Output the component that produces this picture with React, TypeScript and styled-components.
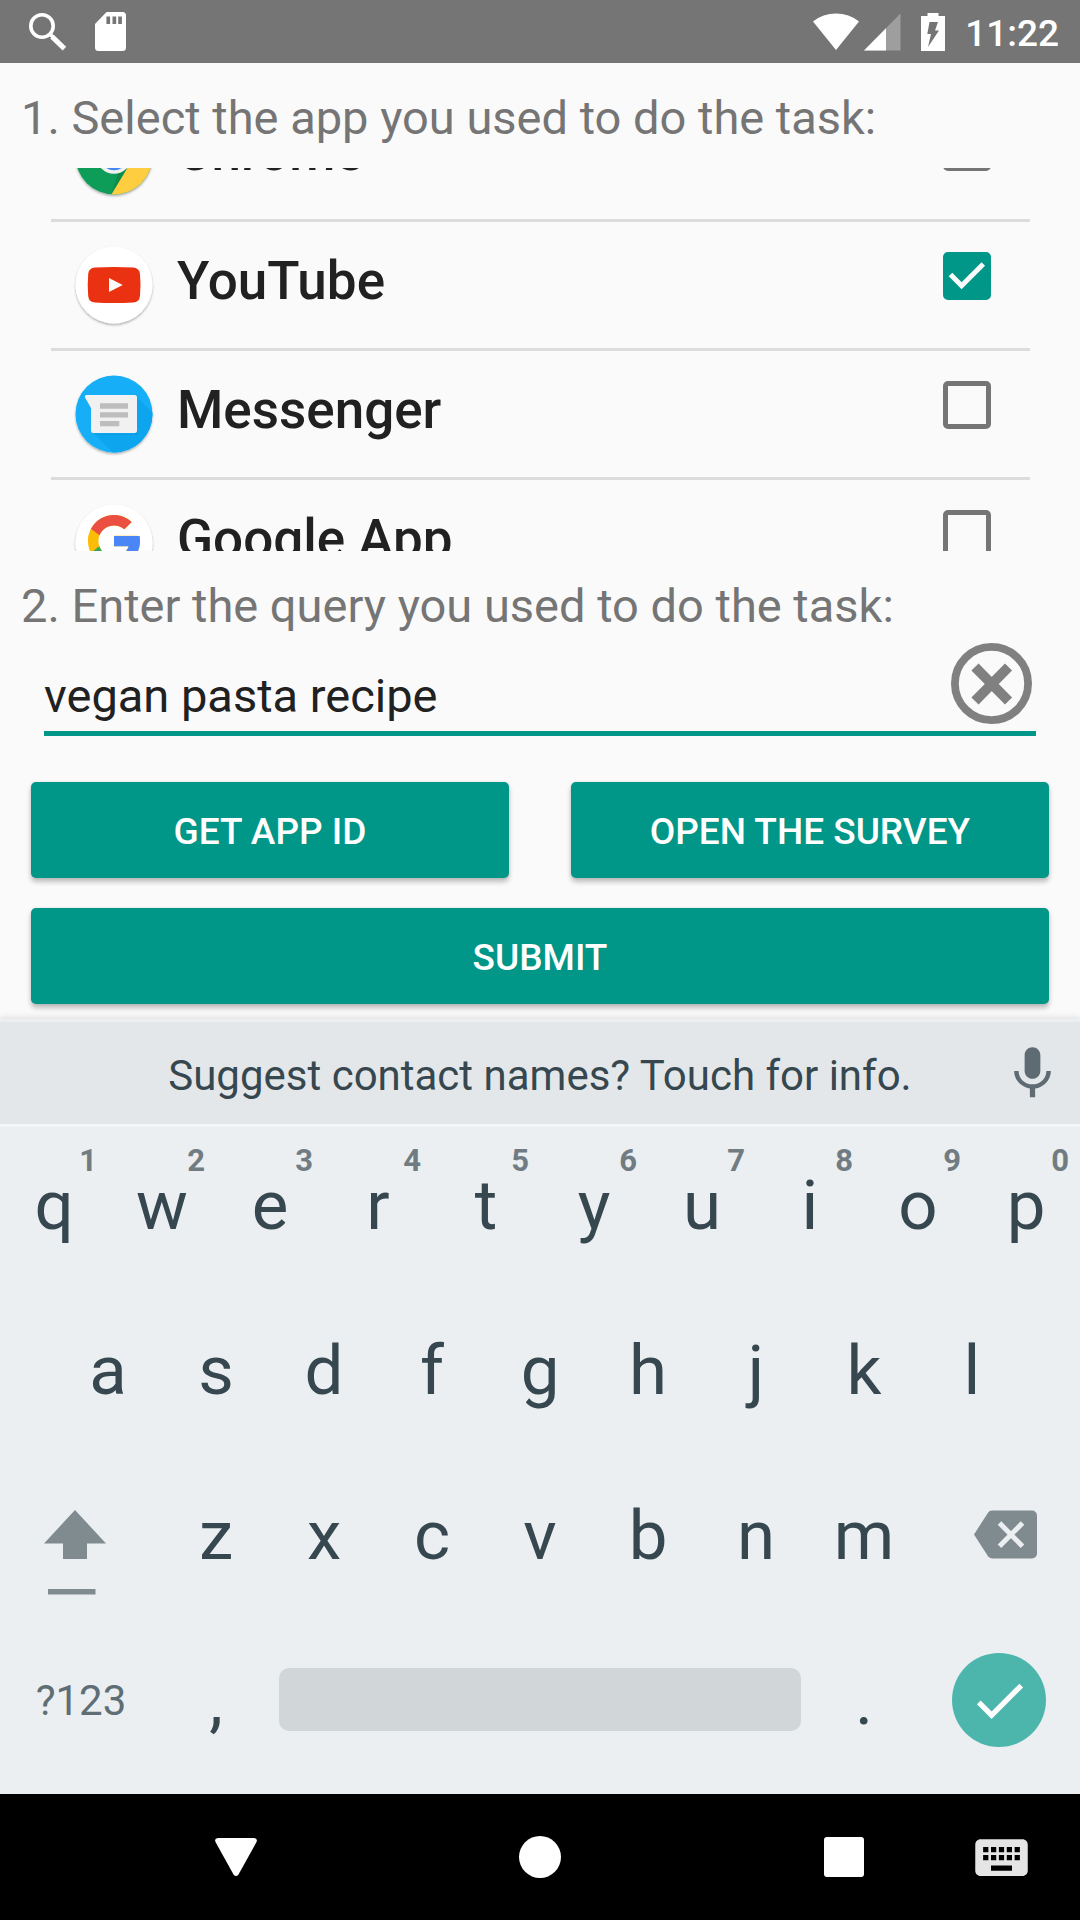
import React, { useLayoutEffect, useRef, useState } from "react";
import styled, { createGlobalStyle } from "styled-components";

const TEAL = "#009688";
const GREY = "#757575";
const INK = "#37474f";

const GlobalStyle = createGlobalStyle`
  *, *::before, *::after { box-sizing: border-box; }
  body { margin: 0; }
  body, button, input { font-family: Roboto, "Liberation Sans", sans-serif; }
  button { border: 0; padding: 0; background: none; color: inherit; cursor: pointer; }
  svg { display: block; flex: none; }
`;

const Screen = styled.div`
  display: flex;
  flex-direction: column;
  height: 100vh;
  overflow: hidden;
  background: #fafafa;
`;

/* ---------- status bar ---------- */

const StatusBar = styled.header`
  display: flex;
  align-items: center;
  justify-content: space-between;
  flex: none;
  height: 63px;
  padding: 0 21px 0 28px;
  background: ${GREY};
  color: #fff;
`;

const StatusGroup = styled.div<{ $gap: number }>`
  display: flex;
  align-items: center;
  gap: ${(p) => p.$gap}px;
`;

const Clock = styled.time`
  padding-top: 4px;
  font-size: 37px;
  line-height: 44px;
  font-weight: 500;
`;

/* ---------- form ---------- */

const Form = styled.form`
  display: flex;
  flex-direction: column;
  flex: 1;
  min-height: 0;
  padding-bottom: 15px;
`;

const Prompt = styled.h2`
  flex: none;
  margin: 0;
  padding: 27px 21px 0;
  font-size: 47px;
  line-height: 56px;
  font-weight: 400;
  color: ${GREY};
`;

const AppList = styled.ul`
  flex: 1;
  min-height: 0;
  margin: 22px 50px 0 51px;
  padding: 0;
  list-style: none;
  overflow-y: auto;
  scrollbar-width: none;
`;

const AppItem = styled.li`
  & + & { border-top: 3px solid #dcdcdc; }
`;

const AppRow = styled.label`
  display: flex;
  align-items: flex-start;
  height: 126px;
  padding: 24px 39px 0 24px;
`;

const AppName = styled.span`
  flex: 1;
  padding: 5px 0 0 24px;
  font-size: 53px;
  line-height: 60px;
  font-weight: 500;
  color: #212121;
`;

const Tick = styled.span`
  display: grid;
  margin-top: 6px;

  & > * { grid-area: 1 / 1; }
  & > svg { pointer-events: none; }
`;

const TickBox = styled.input`
  appearance: none;
  width: 48px;
  height: 48px;
  margin: 0;
  border: 5px solid ${GREY};
  border-radius: 5px;

  &:checked {
    border-color: ${TEAL};
    background: ${TEAL};
  }
`;

const Field = styled.div`
  display: flex;
  align-items: flex-end;
  flex: none;
  margin: 0 44px 46px;
  padding: 9px 4px 7px 0;
  border-bottom: 5px solid ${TEAL};
`;

const QueryInput = styled.input`
  flex: 1;
  min-width: 0;
  height: 56px;
  padding: 0;
  border: 0;
  outline: 0;
  background: none;
  font-size: 47px;
  line-height: 56px;
  color: #212121;
`;

const Actions = styled.div`
  display: grid;
  grid-template-columns: 1fr 1fr;
  gap: 30px 62px;
  flex: none;
  padding: 0 31px;
`;

const ActionButton = styled.button<{ $wide?: boolean }>`
  grid-column: ${(p) => (p.$wide ? "1 / -1" : "auto")};
  height: 96px;
  padding-top: 4px;
  border-radius: 5px;
  background: ${TEAL};
  box-shadow: 0 4px 5px rgba(0, 0, 0, 0.24), 0 0 3px rgba(0, 0, 0, 0.1);
  font-size: 37px;
  line-height: 44px;
  font-weight: 500;
  color: #fff;
`;

/* ---------- keyboard ---------- */

const Keyboard = styled.section`
  flex: none;
  padding-top: 3px;
  background: #ebeff2;
  box-shadow: 0 -2px 6px rgba(0, 0, 0, 0.1);
  color: ${INK};
`;

const SuggestionStrip = styled.div`
  display: grid;
  grid-template-columns: 80px 1fr 80px;
  align-items: center;
  height: 105px;
  border-bottom: 3px solid #f3f5f7;
  background: #e3e7ea;
`;

const Suggestion = styled.button`
  grid-column: 2;
  padding-top: 5px;
  font-size: 42px;
  line-height: 50px;
`;

const MicButton = styled.button`
  justify-self: center;
  padding-right: 16px;
  color: #5f6b72;
`;

const KeyRows = styled.div`
  padding-bottom: 7px;
`;

const KeyRow = styled.div<{ $columns: string; $inset?: boolean }>`
  display: grid;
  grid-template-columns: ${(p) => p.$columns};
  height: 165px;
  padding: 0 ${(p) => (p.$inset ? "5%" : "0")};
`;

const Key = styled.button`
  position: relative;
  display: flex;
  justify-content: center;
  align-items: flex-start;
  padding-top: 38px;
  font-size: 69px;
  line-height: 81px;
`;

const Hint = styled.span`
  position: absolute;
  top: 16px;
  right: 11px;
  font-size: 31px;
  line-height: 36px;
  font-weight: 700;
  color: #717c82;
`;

const IconKey = styled(Key)<{ $side: "left" | "right" }>`
  padding-top: 53px;
  padding-left: ${(p) => (p.$side === "right" ? 12 : 0)}px;
  padding-right: ${(p) => (p.$side === "left" ? 12 : 0)}px;
  color: #808b8f;
`;

const SymbolsKey = styled(Key)`
  font-size: 42px;
  color: #5f6e74;
`;

const SpaceKey = styled.button`
  height: 63px;
  margin: 46px 9px 0;
  border-radius: 10px;
  background: #d1d6d9;
`;

const DoneKey = styled.button`
  display: grid;
  place-items: center;
  justify-self: center;
  width: 94px;
  height: 94px;
  margin-top: 31px;
  border-radius: 50%;
  background: #4db6ac;
  color: #fff;
`;

/* ---------- navigation bar ---------- */

const NavBar = styled.nav`
  display: grid;
  grid-template-columns: 157px 158px 1fr 158px 157px;
  flex: none;
  height: 126px;
  background: #000;
  color: #fff;
`;

const NavButton = styled.button<{ $first?: boolean }>`
  grid-column: ${(p) => (p.$first ? 2 : "auto")};
  display: grid;
  place-items: center;
`;

/* ---------- drawings ---------- */

const SearchIcon = () => (
  <svg width="39" height="39" viewBox="0 0 39 39" fill="none" stroke="#fff">
    <circle cx="14" cy="14" r="11.2" strokeWidth="3.6" />
    <path d="M22.5 22.5L25 25" strokeWidth="3.6" />
    <path d="M24 24.6L36.4 36.6" strokeWidth="5" />
  </svg>
);

const SdCardIcon = () => (
  <svg width="31" height="39" viewBox="0 0 31 39">
    <path
      fill="#fff"
      fillRule="evenodd"
      d="M11.5 0H27.500a3.500 3.500 0 0 1 3.500 3.500V35.500a3.500 3.500 0 0 1-3.500 3.500H3.500A3.500 3.500 0 0 1 0 35.500V12zM11.400 4.500v7.500h3.700V4.500zM17.500 4.500v7.500h3.700V4.500zM23.200 4.500v7.500h3.700V4.500z"
    />
  </svg>
);

const SignalIcons = () => (
  <svg width="88" height="38" viewBox="0 0 88 38" fill="#fff">
    <path d="M0 8.500C6.500 3.200 14.500 0.500 23 0.500S39.500 3.200 46 8.500L23 37z" />
    <path d="M51 37.500L87.500 0.500V37.500z" opacity=".3" />
    <path d="M51 37.500L73 15.200V37.500z" />
  </svg>
);

const BatteryIcon = () => (
  <svg width="24" height="38" viewBox="0 0 24 38">
    <path fill="#fff" d="M6.500 0h11v3H24v35H0V3h6.500z" />
    <path fill={GREY} d="M8.500 9h8.500l-3 8.500h4L7 34l3-13H6.300z" />
  </svg>
);

const CheckIcon = ({ size }: { size: number }) => (
  <svg width={size} height={size} viewBox="0 0 24 24" fill="currentColor">
    <path d="M9 16.170L4.830 12l-1.420 1.410L9 19 21 7l-1.410-1.410z" />
  </svg>
);

const TickMark = () => (
  <svg width="48" height="48" viewBox="0 0 48 48" fill="none" stroke="#fafafa" strokeWidth="5">
    <path d="M7.500 22.500L18.600 33.700L40.300 12" />
  </svg>
);

const ClearIcon = () => (
  <svg width="81" height="81" viewBox="0 0 81 81" fill="none" stroke="#808080">
    <circle cx="40.500" cy="40.500" r="36.600" strokeWidth="7.800" />
    <path d="M24 24L57.500 58M57.500 24L24 58" strokeWidth="10" />
  </svg>
);

const MicIcon = () => (
  <svg width="63" height="63" viewBox="0 0 24 24" fill="currentColor">
    <path d="M12 14c1.660 0 2.990-1.340 2.990-3L15 5c0-1.660-1.340-3-3-3S9 3.340 9 5v6c0 1.660 1.340 3 3 3zm5.300-3c0 3-2.540 5.100-5.300 5.100S6.700 14 6.700 11H5c0 3.410 2.720 6.230 6 6.720V21h2v-3.280c3.280-.480 6-3.300 6-6.720h-1.700z" />
  </svg>
);

const ShiftIcon = () => (
  <svg width="62" height="85" viewBox="0 0 62 85" fill="currentColor">
    <path d="M31 0L62 33.500H43V49H19V33.500H0z" />
    <path d="M4 79h47.500v5.500H4z" />
  </svg>
);

const BackspaceIcon = () => (
  <svg width="63" height="49" viewBox="0 0 63 49">
    <path
      fill="currentColor"
      d="M18 0.500H58a5 5 0 0 1 5 5V43.500a5 5 0 0 1-5 5H18a5 5 0 0 1-4-2.200L0 24.500 14 2.700A5 5 0 0 1 18 0.500z"
    />
    <path d="M25.500 13L48.500 36.300M48.500 13L25.500 36.300" stroke="#ebeff2" strokeWidth="5" />
  </svg>
);

const NavKeyboardIcon = () => (
  <svg width="63" height="63" viewBox="0 0 24 24" fill="#e5e5e5">
    <path d="M20 5H4c-1.100 0-1.990.900-1.990 2L2 17c0 1.100.900 2 2 2h16c1.100 0 2-.900 2-2V7c0-1.100-.900-2-2-2zm-9 3h2v2h-2V8zm0 3h2v2h-2v-2zM8 8h2v2H8V8zm0 3h2v2H8v-2zm-1 2H5v-2h2v2zm0-3H5V8h2v2zm9 7H8v-2h8v2zm0-4h-2v-2h2v2zm0-3h-2V8h2v2zm3 3h-2v-2h2v2zm0-3h-2V8h2v2z" />
  </svg>
);

const Disc = ({ id, fill, children }: { id: string; fill: string; children: React.ReactNode }) => (
  <svg width="78" height="78" viewBox="0 0 78 78" overflow="visible">
    <defs>
      <clipPath id={id}>
        <circle cx="39" cy="39" r="38.500" />
      </clipPath>
      <filter id={`${id}-shadow`} x="-20%" y="-20%" width="140%" height="140%">
        <feDropShadow dx="0" dy="1.500" stdDeviation="1.200" floodOpacity=".32" />
      </filter>
    </defs>
    <circle cx="39" cy="39" r="38.500" fill={fill} filter={`url(#${id}-shadow)`} />
    <g clipPath={`url(#${id})`}>{children}</g>
  </svg>
);

const ChromeLogo = () => (
  <Disc id="chrome" fill="#0f9d58">
    <path fill="#ffcd40" d="M39 21.500H78V78H36L54.200 47.800z" />
    <path fill="#db4437" d="M0 0H78V21.500H39L23.800 47.800L5 17z" />
    <path fill="#0b8043" opacity=".6" d="M54.200 47.800L36.500 77L44 53z" />
    <circle cx="39" cy="39" r="17.800" fill="#f1f1f1" />
    <circle cx="39" cy="39" r="14.200" fill="#4285f4" />
  </Disc>
);

const YouTubeLogo = () => (
  <Disc id="youtube" fill="#fff">
    <path
      fill="#ea3112"
      d="M20 21.500Q39 20.300 58 21.500Q64.500 22 65 28Q66 39 65 50Q64.500 56 58 56.500Q39 57.700 20 56.500Q13.700 56 13.200 50Q12.200 39 13.200 28Q13.700 22 20 21.500z"
    />
    <path fill="#fafafa" d="M34 32L47.700 39L34 46z" />
  </Disc>
);

const MessengerLogo = () => (
  <Disc id="messenger" fill="#12aef6">
    <path fill="#0ca5ee" d="M61 21L90 50V90H50L18 57z" />
    <path fill="#0b86c4" opacity=".45" d="M18 59.500H60L62 57V60H18z" />
    <path fill="#f1f1f1" d="M11.500 20H59.500a2.500 2.500 0 0 1 2.500 2.500V55.500a2.500 2.500 0 0 1-2.500 2.500H18.500a2.500 2.500 0 0 1-2.500-2.500V33L10 22.500Q9.500 20 11.500 20z" />
    <path fill="#bdbdbd" d="M25 28.300h28v5.400H25zM25 37.300h28v5.200H25zM25 46h19.300v5.200H25z" />
  </Disc>
);

const GoogleLogo = () => (
  <Disc id="google" fill="#fff">
    <g transform="translate(7.800 5.800) scale(1.300)">
      <path fill="#fbbc05" d="M43.611 20.083H42V20H24v8h11.303c-1.649 4.657-6.080 8-11.303 8-6.627 0-12-5.373-12-12s5.373-12 12-12c3.059 0 5.842 1.154 7.961 3.039l5.657-5.657C34.046 6.053 29.268 4 24 4 12.955 4 4 12.955 4 24s8.955 20 20 20 20-8.955 20-20c0-1.341-.138-2.650-.389-3.917z" />
      <path fill="#ea4f41" d="M6.306 14.691l6.571 4.819C14.655 15.108 18.961 12 24 12c3.059 0 5.842 1.154 7.961 3.039l5.657-5.657C34.046 6.053 29.268 4 24 4 16.318 4 9.656 8.337 6.306 14.691z" />
      <path fill="#34a853" d="M24 44c5.166 0 9.860-1.977 13.409-5.192l-6.190-5.238A11.910 11.910 0 0 1 24 36c-5.202 0-9.619-3.317-11.283-7.946l-6.522 5.025C9.505 39.556 16.227 44 24 44z" />
      <path fill="#4a86f5" d="M43.611 20.083H24v8h11.303a12.040 12.040 0 0 1-4.087 5.571l6.190 5.238C36.971 39.205 44 34 44 24c0-1.341-.138-2.650-.389-3.917z" />
    </g>
  </Disc>
);

/* ---------- data ---------- */

const APPS = [
  { name: "Chrome", Logo: ChromeLogo },
  { name: "YouTube", Logo: YouTubeLogo },
  { name: "Messenger", Logo: MessengerLogo },
  { name: "Google App", Logo: GoogleLogo },
];

const LIST_SCROLL = 75;
const TOP_ROW = "qwertyuiop".split("");
const HOME_ROW = "asdfghjkl".split("");
const LOWER_ROW = "zxcvbnm".split("");

export default function App() {
  const list = useRef<HTMLUListElement>(null);
  const [checked, setChecked] = useState<string[]>(["YouTube"]);
  const [query, setQuery] = useState("vegan pasta recipe");

  useLayoutEffect(() => {
    if (list.current) list.current.scrollTop = LIST_SCROLL;
  }, []);

  const toggle = (name: string) =>
    setChecked((now) => (now.includes(name) ? now.filter((n) => n !== name) : [...now, name]));
  const type = (text: string) => setQuery((now) => now + text);

  return (
    <Screen>
      <GlobalStyle />
      <StatusBar>
        <StatusGroup $gap={28}>
          <SearchIcon />
          <SdCardIcon />
        </StatusGroup>
        <StatusGroup $gap={20}>
          <SignalIcons />
          <BatteryIcon />
          <Clock>11:22</Clock>
        </StatusGroup>
      </StatusBar>

      <Form onSubmit={(e) => e.preventDefault()}>
        <Prompt>1. Select the app you used to do the task:</Prompt>
        <AppList ref={list}>
          {APPS.map(({ name, Logo }) => (
            <AppItem key={name}>
              <AppRow>
                <Logo />
                <AppName>{name}</AppName>
                <Tick>
                  <TickBox
                    type="checkbox"
                    checked={checked.includes(name)}
                    onChange={() => toggle(name)}
                  />
                  {checked.includes(name) && <TickMark />}
                </Tick>
              </AppRow>
            </AppItem>
          ))}
        </AppList>

        <Prompt as="label" htmlFor="query">
          2. Enter the query you used to do the task:
        </Prompt>
        <Field>
          <QueryInput id="query" value={query} onChange={(e) => setQuery(e.target.value)} />
          <button type="button" aria-label="Clear" onClick={() => setQuery("")}>
            <ClearIcon />
          </button>
        </Field>

        <Actions>
          <ActionButton type="button">GET APP ID</ActionButton>
          <ActionButton type="button">OPEN THE SURVEY</ActionButton>
          <ActionButton type="submit" $wide>
            SUBMIT
          </ActionButton>
        </Actions>
      </Form>

      <Keyboard>
        <SuggestionStrip>
          <Suggestion>Suggest contact names? Touch for info.</Suggestion>
          <MicButton aria-label="Voice input">
            <MicIcon />
          </MicButton>
        </SuggestionStrip>
        <KeyRows>
          <KeyRow $columns="repeat(10, 1fr)">
            {TOP_ROW.map((k, i) => (
              <Key key={k} onClick={() => type(k)}>
                {k}
                <Hint>{(i + 1) % 10}</Hint>
              </Key>
            ))}
          </KeyRow>
          <KeyRow $columns="repeat(9, 1fr)" $inset>
            {HOME_ROW.map((k) => (
              <Key key={k} onClick={() => type(k)}>
                {k}
              </Key>
            ))}
          </KeyRow>
          <KeyRow $columns="3fr repeat(7, 2fr) 3fr">
            <IconKey $side="left" aria-label="Shift">
              <ShiftIcon />
            </IconKey>
            {LOWER_ROW.map((k) => (
              <Key key={k} onClick={() => type(k)}>
                {k}
              </Key>
            ))}
            <IconKey $side="right" aria-label="Backspace" onClick={() => setQuery((q) => q.slice(0, -1))}>
              <BackspaceIcon />
            </IconKey>
          </KeyRow>
          <KeyRow $columns="3fr 2fr 10fr 2fr 3fr">
            <SymbolsKey>?123</SymbolsKey>
            <Key onClick={() => type(",")}>,</Key>
            <SpaceKey aria-label="Space" onClick={() => type(" ")} />
            <Key onClick={() => type(".")}>.</Key>
            <DoneKey aria-label="Done">
              <CheckIcon size={63} />
            </DoneKey>
          </KeyRow>
        </KeyRows>
      </Keyboard>

      <NavBar>
        <NavButton $first aria-label="Back">
          <svg width="42" height="38" viewBox="0 0 42 38">
            <path
              fill="#fff"
              d="M3 0H39Q43 0.500 41.500 4L23.500 36.500Q21 39.500 18.500 36.500L0.500 4Q-1 0.500 3 0z"
            />
          </svg>
        </NavButton>
        <NavButton aria-label="Home">
          <svg width="42" height="42" viewBox="0 0 42 42">
            <circle cx="21" cy="21" r="21" fill="#fff" />
          </svg>
        </NavButton>
        <NavButton aria-label="Recent apps">
          <svg width="40" height="40" viewBox="0 0 40 40">
            <rect width="40" height="40" rx="3" fill="#fff" />
          </svg>
        </NavButton>
        <NavButton aria-label="Switch keyboard">
          <NavKeyboardIcon />
        </NavButton>
      </NavBar>
    </Screen>
  );
}
